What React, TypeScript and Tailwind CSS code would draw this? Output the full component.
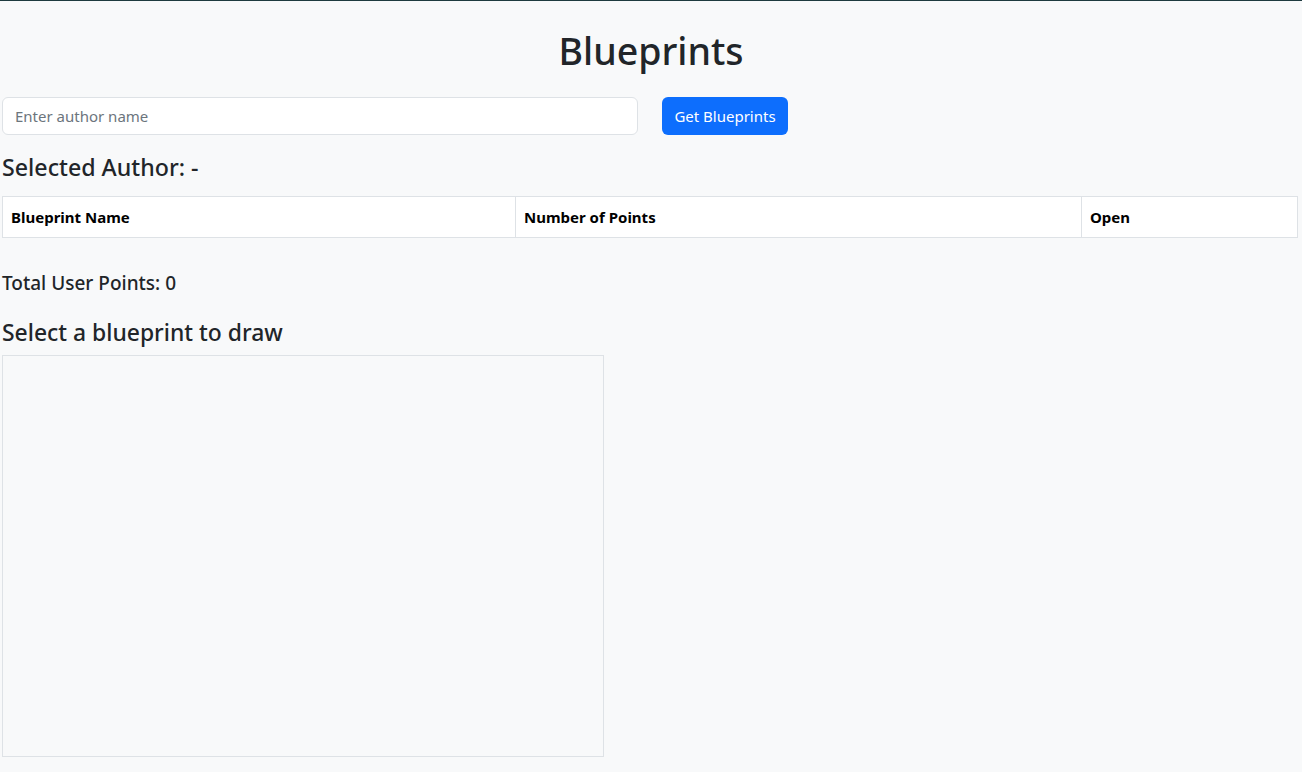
import { useState } from 'react';

export default function App() {
    const [author, setAuthor] = useState('');

    return (
        <div className="min-h-[772px] bg-[#f8f9fa] border-t border-[#1e3a3f] text-[#212529] font-['Noto_Sans',sans-serif]">
            <div className="px-[2px]">
                <h1 className="text-center text-[37.5px] font-medium leading-[48px] pt-[26px] mb-[22px]">Blueprints</h1>

                <div className="flex items-center gap-[24px] mb-[18px]">
                    <input
                        value={author}
                        onChange={(e) => setAuthor(e.target.value)}
                        placeholder="Enter author name"
                        className="w-[636px] h-[38px] px-3 bg-white border border-[#dee2e6] rounded-[6px] text-[15px] placeholder:text-[#6c757d] outline-none"
                    />
                    <button className="h-[38px] w-[126px] bg-[#0d6efd] text-white text-[15px] rounded-[6px]">
                        Get Blueprints
                    </button>
                </div>

                <h4 className="text-[23.2px] font-medium leading-[28px] mb-[15px]">Selected Author: -</h4>

                <table className="w-[1296px] bg-white border-collapse text-[15px] text-black mb-[33px]">
                    <thead>
                        <tr>
                            <th className="w-[513px] h-[41px] text-left font-bold px-2 border border-[#dee2e6]">Blueprint Name</th>
                            <th className="w-[566px] h-[41px] text-left font-bold px-2 border border-[#dee2e6]">Number of Points</th>
                            <th className="h-[41px] text-left font-bold px-2 border border-[#dee2e6]">Open</th>
                        </tr>
                    </thead>
                    <tbody></tbody>
                </table>

                <h5 className="text-[19px] font-medium leading-[24px] mb-[24px]">Total User Points: 0</h5>

                <h4 className="text-[22.9px] font-medium leading-[28px] mb-[8px]">Select a blueprint to draw</h4>
                <div className="w-[602px] h-[402px] border border-[#dee2e6]"></div>
            </div>
        </div>
    );
}
